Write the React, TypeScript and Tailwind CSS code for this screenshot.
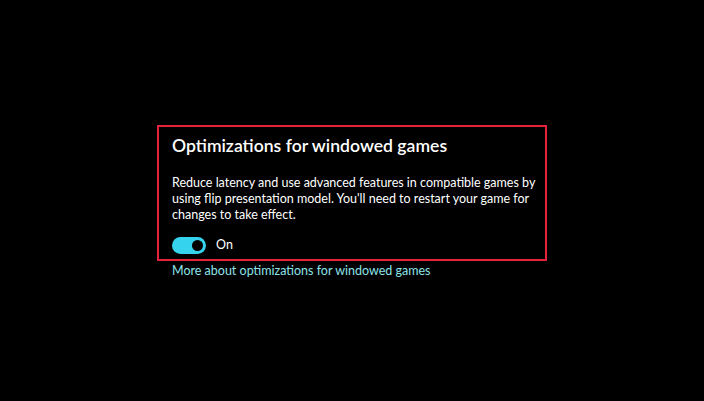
import { useState } from "react";

const GameSetting = () => {
  const [enabled, setEnabled] = useState(true);

  return (
    <div className="w-[390px]">
      <div className="border-2 border-[#e8203a] pl-[13px] pr-[8px] pt-[5px] pb-[4px]">
        <h2 className="text-[17.6px] font-semibold text-white leading-[28px]">
          Optimizations for windowed games
        </h2>
        <p className="mt-[15px] text-[12.5px] leading-[16px] text-white">
          Reduce latency and use advanced features in compatible games by
          using flip presentation model. You'll need to restart your game for
          changes to take effect.
        </p>
        <div className="mt-[13px] flex items-center gap-[10px]">
          <button
            type="button"
            onClick={() => setEnabled(!enabled)}
            className="relative h-[17px] w-[34px] rounded-full bg-[#36d3ee]"
          >
            <span
              className={
                enabled
                  ? "absolute right-[3px] top-[3px] h-[11px] w-[11px] rounded-full bg-black"
                  : "absolute left-[3px] top-[3px] h-[11px] w-[11px] rounded-full bg-black"
              }
            />
          </button>
          <span className="text-[12.5px] text-white">{enabled ? "On" : "Off"}</span>
        </div>
      </div>
      <a className="mt-[2px] block pl-[15px] text-[12.5px] leading-[16px] text-[#8ee3ea]">
        More about optimizations for windowed games
      </a>
    </div>
  );
};

export default function App() {
  return (
    <div
      className="flex h-[401px] w-[704px] bg-black pl-[157px] pt-[125px]"
      style={{ fontFamily: 'Lato, "Noto Sans", sans-serif' }}
    >
      <GameSetting />
    </div>
  );
}
